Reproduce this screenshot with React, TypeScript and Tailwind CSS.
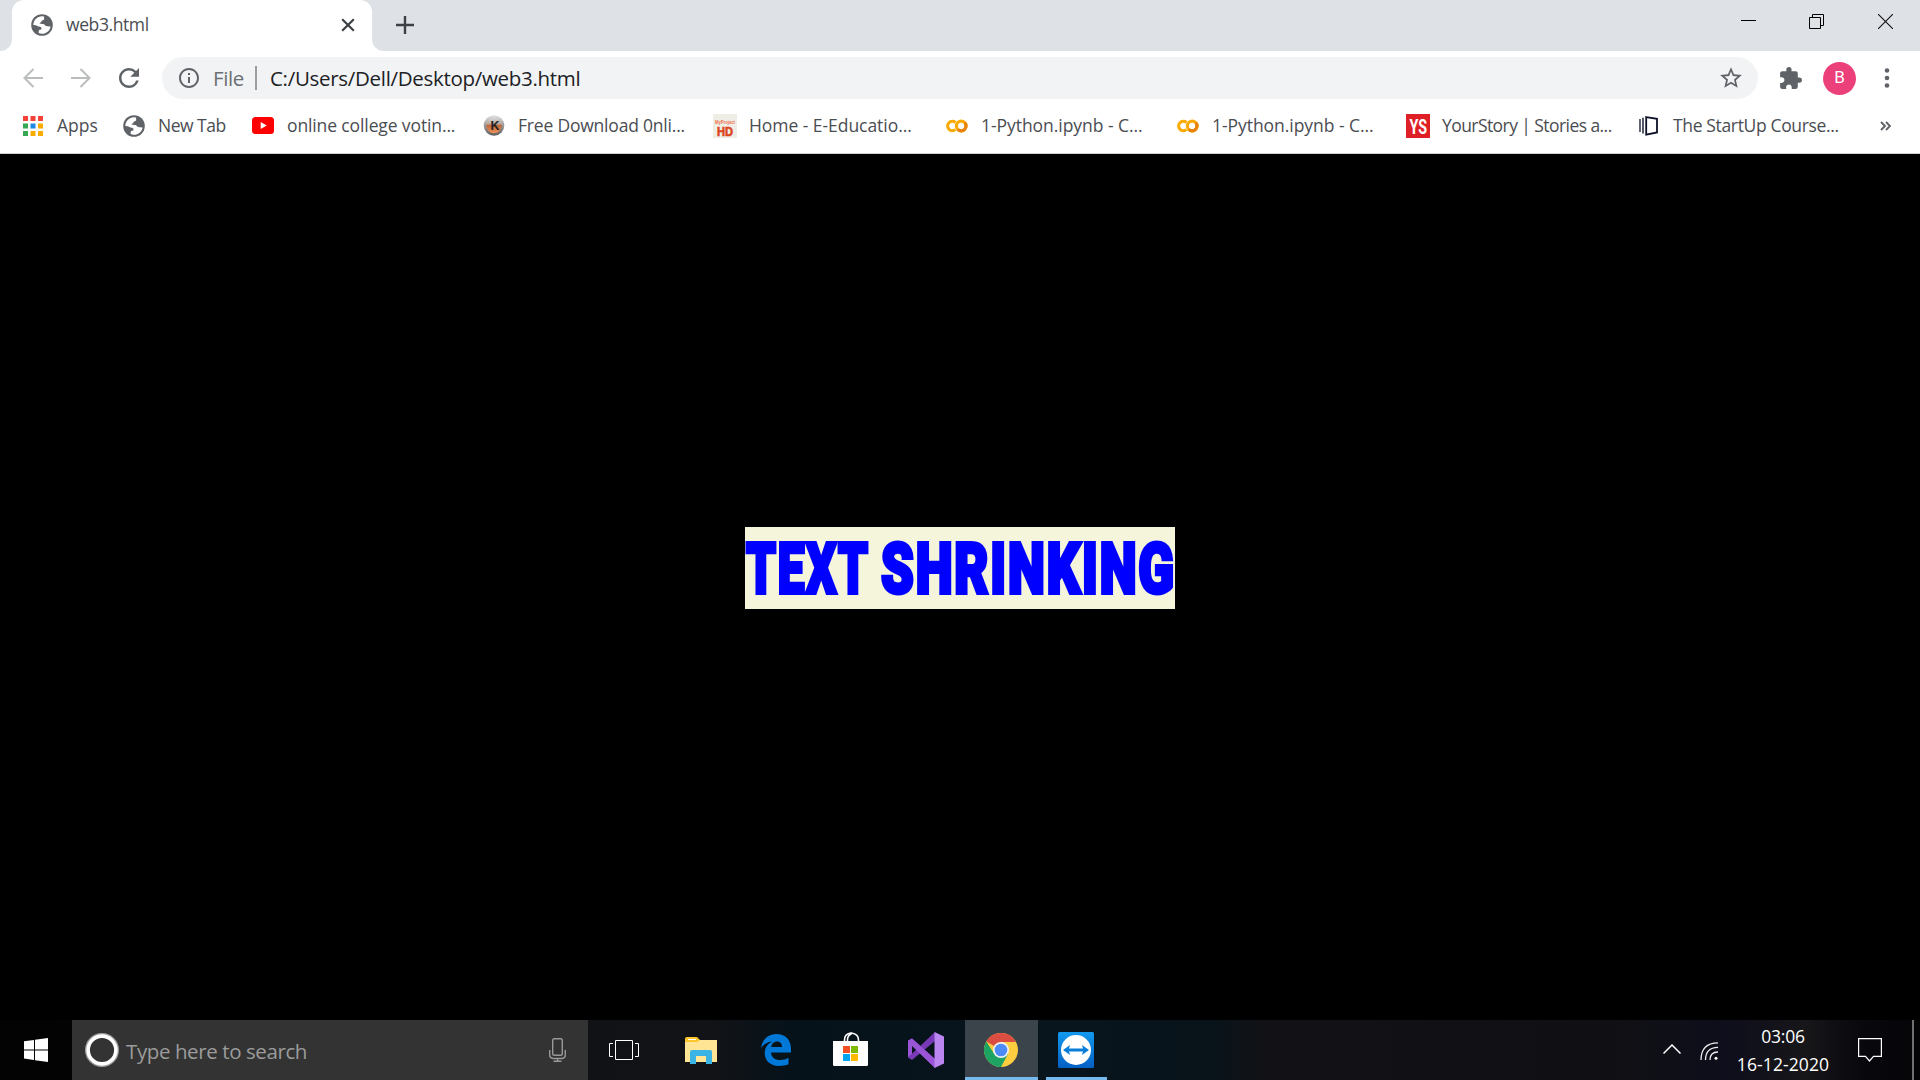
import type { ReactNode } from 'react';
import { MdRefresh, MdInfoOutline, MdStarBorder, MdExtension } from 'react-icons/md';

function Globe() {
  return (
    <svg width="22" height="22" viewBox="0 0 22 22">
      <circle cx="11" cy="11" r="10.8" fill="#5f6368" />
      <path d="M10.2 2.2 L13.2 2.4 C12.6 4 13.6 4.2 13.2 5.2 C12.6 6.6 10.6 5.8 10.4 7.4 C10.2 8.6 8.8 8.2 8.6 9.4 C10 10.2 12.4 9.2 13.4 10.6 C14 11.8 15 12.2 16.4 12.2 L19.6 12.4 C18.9 16.6 15.4 19.7 11 19.8 C9.8 19.8 8.6 19.5 7.6 19.1 L7.8 16.6 C8.2 15.4 10.4 16.2 10.6 14.4 C10.4 12.4 7.6 13 6.4 12 C5.2 11 3.8 11.2 2.3 11 C2.3 6.8 5.6 2.9 10.2 2.2Z" fill="#fff" />
    </svg>
  );
}

function AppsGrid() {
  const colors = ['#f44336', '#f44336', '#f44336', '#34a853', '#1e88e5', '#f9ab00', '#34a853', '#f9ab00', '#f9ab00'];
  return (
    <svg width="20" height="20" viewBox="0 0 20 20">
      {colors.map((c, i) => (
        <rect key={i} x={(i % 3) * 7.5} y={Math.floor(i / 3) * 7.5} width="5" height="5" fill={c} />
      ))}
    </svg>
  );
}

function YouTube() {
  return (
    <svg width="22" height="17" viewBox="0 0 22 17">
      <rect width="22" height="17" rx="3.5" fill="#f00" />
      <path d="M8.7 5v7l6-3.5z" fill="#fff" />
    </svg>
  );
}

function KBadge() {
  return (
    <svg width="22" height="22" viewBox="0 0 22 22" className="overflow-visible">
      <defs>
        <linearGradient id="kRim" x2="0" y2="1">
          <stop offset="0" stopColor="#e4e4e4" />
          <stop offset=".5" stopColor="#9a9a9a" />
          <stop offset="1" stopColor="#5c5c5c" />
        </linearGradient>
        <linearGradient id="kFace" x2="0" y2="1">
          <stop offset="0" stopColor="#d8d8d8" />
          <stop offset=".4" stopColor="#b9a79c" />
          <stop offset=".5" stopColor="#c0683a" />
          <stop offset="1" stopColor="#f0935a" />
        </linearGradient>
      </defs>
      <circle cx="11" cy="10.5" r="10.3" fill="url(#kRim)" />
      <circle cx="11" cy="10.5" r="7.8" fill="url(#kFace)" />
      <text x="7.5" y="15" fontFamily="Liberation Sans" fontWeight="700" fontSize="13" textLength="9" lengthAdjust="spacingAndGlyphs" fill="#222">K</text>
    </svg>
  );
}

function HDBadge() {
  return (
    <svg width="24" height="24" viewBox="0 0 24 24" className="overflow-visible">
      <rect width="24" height="24" fill="#eeeee6" />
      <text x="2" y="9.5" fontFamily="Liberation Sans" fontWeight="700" fontSize="5.2" textLength="20" lengthAdjust="spacingAndGlyphs" fill="#f0714f">MyProject</text>
      <text x="4" y="21.5" fontFamily="Liberation Sans" fontWeight="700" fontSize="12" textLength="16" lengthAdjust="spacingAndGlyphs" fill="#dc4520" stroke="#dc4520" strokeWidth=".6">HD</text>
    </svg>
  );
}

function Colab() {
  return (
    <svg width="22" height="14" viewBox="0 0 22 14" fill="none" strokeWidth="3.2">
      <path d="M9.4 3.4A4.7 4.7 0 1 0 9.4 10.6" stroke="#f9ab00" />
      <circle cx="15.2" cy="7" r="4.8" stroke="#f9ab00" />
      <path d="M11.8 10.4A4.8 4.8 0 0 0 18.6 3.6" stroke="#e8830c" />
    </svg>
  );
}

function YourStory() {
  return (
    <svg width="24" height="24" viewBox="0 0 24 24" className="overflow-visible">
      <rect width="24" height="24" fill="#df1f26" />
      <text x="3.5" y="19.5" fontFamily="Roboto" fontWeight="700" fontSize="20" textLength="17.5" lengthAdjust="spacingAndGlyphs" fill="#fff">YS</text>
    </svg>
  );
}

function StartUp() {
  return (
    <svg width="20" height="20" viewBox="0 0 20 20" fill="none" stroke="#0b1026">
      <path d="M1 3v13" strokeWidth="1.3" />
      <path d="M4 1.8v15.6" strokeWidth="1.4" />
      <path d="M7.2 1.1L18 2.8V16.4L7.2 18.6z" strokeWidth="1.8" />
    </svg>
  );
}

function Bookmark({ icon, label, width, tracking }: { icon: ReactNode; label: string; width: string; tracking: string }) {
  return (
    <div className={`flex shrink-0 items-center gap-3 ${width}`}>
      <span className="flex h-6 w-6 shrink-0 items-center justify-center">{icon}</span>
      <span className={`whitespace-nowrap pb-0.5 text-[17.5px] leading-6 text-[#4a4d51] ${tracking}`}>{label}</span>
    </div>
  );
}

function TitleBar() {
  return (
    <div className="flex h-[51px] bg-[#dee1e6]">
      <svg className="shrink-0" width="12" height="51"><path d="M0 51A12 12 0 0 0 12 39V51z" fill="#fff" /></svg>
      <div className="flex h-[51px] w-[360px] shrink-0 items-center rounded-t-[12px] bg-white pb-px pl-[19px] pr-[17px]">
        <Globe />
        <span className="ml-[13px] flex-1 pb-0.5 text-[17.5px] leading-6 tracking-[-0.4px] text-[#4a4d51]">web3.html</span>
        <svg width="14" height="14" viewBox="0 0 14 14" stroke="#3c4043" strokeWidth="2.2"><path d="M1.2 1.2l11.6 11.6M12.8 1.2L1.2 12.8" /></svg>
      </div>
      <svg className="shrink-0" width="12" height="51"><path d="M12 51A12 12 0 0 1 0 39V51z" fill="#fff" /></svg>
      <svg className="ml-3 mt-4 shrink-0" width="18" height="18" stroke="#3c4043" strokeWidth="2.4"><path d="M9 0v18M0 9h18" /></svg>
      <div className="ml-auto mr-[27px] flex gap-[53px] pt-[14px]">
        <svg width="15" height="15" stroke="#000"><path d="M0 6.5h15" /></svg>
        <svg width="15" height="15" stroke="#000" fill="none"><path d="M.5 3.5h11v11H.5zM3.5 3.5v-3h11v11h-3" /></svg>
        <svg width="15" height="15" stroke="#111" strokeWidth="1.1" className="ml-px"><path d="M0 0l15 15M15 0L0 15" /></svg>
      </div>
    </div>
  );
}

function Toolbar() {
  return (
    <div className="flex h-[54px] items-center bg-white pl-[23px]">
      <svg width="20" height="20" fill="none" stroke="#babcbe" strokeWidth="2"><path d="M20 10H1.5M10.5 1L1.5 10l9 9" /></svg>
      <svg className="ml-7" width="20" height="20" fill="none" stroke="#babcbe" strokeWidth="2"><path d="M0 10h18.5M9.5 1l9 9-9 9" /></svg>
      <MdRefresh className="ml-[23px] shrink-0 text-[#5f6368]" size={30} />
      <div className="ml-[18px] flex h-[42px] w-[1596px] items-center rounded-full bg-[#f1f3f4] pl-[15px] pr-[14px]">
        <MdInfoOutline className="shrink-0 text-[#5f6368]" size={24} />
        <span className="ml-3 w-[42px] text-[20.5px] leading-7 tracking-[-0.4px] text-[#6b6f73]">File</span>
        <span className="h-6 w-0.5 bg-[#9a9da1]" />
        <span className="ml-[13px] flex-1 text-[20.5px] leading-7 tracking-[-0.3px] text-[#202124]">C:/Users/Dell/Desktop/web3.html</span>
        <MdStarBorder className="shrink-0 text-[#5f6368]" size={26} />
      </div>
      <MdExtension className="ml-5 shrink-0 text-[#5f6368]" size={25} />
      <span className="ml-5 flex h-[33px] w-[33px] shrink-0 items-center justify-center rounded-full bg-[#ec407a] font-['Roboto'] text-[17px] text-white">B</span>
      <svg className="ml-[28px]" width="6" height="20" fill="#5f6368"><circle cx="3" cy="2.5" r="2.3" /><circle cx="3" cy="10" r="2.3" /><circle cx="3" cy="17.5" r="2.3" /></svg>
    </div>
  );
}

function BookmarksBar() {
  return (
    <div className="flex h-[49px] border-b border-[#d0d2d5] bg-white pb-[7px] pl-[21px]">
      <Bookmark icon={<AppsGrid />} label="Apps" width="w-[101px]" tracking="tracking-[0px]" />
      <Bookmark icon={<Globe />} label="New Tab" width="w-[129px]" tracking="tracking-[-0.5px]" />
      <Bookmark icon={<YouTube />} label="online college votin..." width="w-[231px]" tracking="tracking-[-0.12px]" />
      <Bookmark icon={<KBadge />} label="Free Download 0nli..." width="w-[231px]" tracking="tracking-[-0.2px]" />
      <Bookmark icon={<HDBadge />} label="Home - E-Educatio..." width="w-[232px]" tracking="tracking-[-0.05px]" />
      <Bookmark icon={<Colab />} label="1-Python.ipynb - C..." width="w-[231px]" tracking="tracking-[-0.05px]" />
      <Bookmark icon={<Colab />} label="1-Python.ipynb - C..." width="w-[230px]" tracking="tracking-[-0.05px]" />
      <Bookmark icon={<YourStory />} label="YourStory | Stories a..." width="w-[231px]" tracking="tracking-[-0.57px]" />
      <Bookmark icon={<StartUp />} label="The StartUp Course..." width="w-[243px]" tracking="tracking-[-0.35px]" />
      <svg className="mt-[16px]" width="11" height="10" fill="none" stroke="#5f6368" strokeWidth="1.9"><path d="M1 1l4 4-4 4M6 1l4 4-4 4" /></svg>
    </div>
  );
}

function Page() {
  return (
    <main className="flex h-[866px] justify-center bg-black pt-[373px]">
      <h1 className="flex h-[82px] w-[430px] whitespace-nowrap bg-[#f5f5dc] font-['Roboto'] text-[71px] font-black leading-[83px] text-[#0000ff]">
        <span className="w-[136px] shrink-0 pl-px"><span className="inline-block origin-left scale-x-[0.67] tracking-[2.5px] [-webkit-text-stroke:4px_#0000ff]">TEXT</span></span>
        <span className="w-[294px] shrink-0"><span className="inline-block origin-left scale-x-[0.738] tracking-[2.5px] [-webkit-text-stroke:4px_#0000ff]">SHRINKING</span></span>
      </h1>
    </main>
  );
}

function Taskbar() {
  return (
    <div className="flex h-[60px] bg-[linear-gradient(90deg,#030303_0%,#030303_3%,#101216_31%,#121316_37%,#06121a_41%,#08151c_55%,#08131a_63%,#121216_66%,#101014_84%,#0e0e1c_90%,#171619_94%,#08080d_97%,#050508_100%)] text-white">
      <div className="flex w-[72px] items-center justify-center">
        <svg width="24" height="24" viewBox="0 0 24 24" fill="#fff"><path d="M0 3.3L10 2v9.5H0zM11 1.8L24 0v11.5H11zM0 12.5h10V22L0 20.6zM11 12.5h13V24L11 22.2z" /></svg>
      </div>
      <div className="flex w-[516px] shrink-0 items-center bg-[#333333] pl-[13px] pr-[22px]">
        <svg width="34" height="34"><circle cx="17" cy="17" r="15" fill="none" stroke="#a0a0a0" strokeWidth="4" /><circle cx="17" cy="17" r="13.9" fill="none" stroke="#fff" strokeWidth="3.6" /></svg>
        <span className="ml-[7px] flex-1 pt-px text-[20.5px] leading-7 tracking-[-0.4px] text-[#9b9b9b]">Type here to search</span>
        <svg width="17" height="24" fill="none" stroke="#999" strokeWidth="1.4"><rect x="3.7" y=".7" width="9.6" height="16.6" rx="1.5" /><path d="M.7 12v4.5q0 4 4 4h7.6q4 0 4-4V12M8.5 20.5v3M4.5 23.2h8" /></svg>
      </div>
      <div className="flex w-[72px] items-center justify-center">
        <svg width="30" height="20" fill="none" stroke="#fff"><path d="M6.5.5h17v19h-17zM4 3.5H.5v13H4M26 3.5h3.5v13H26" /></svg>
      </div>
      <div className="flex w-[82px] items-center justify-center">
        <svg width="32" height="27"><path d="M0 2Q0 0 2 0h10l3 3v3H0z" fill="#fcc62d" /><path d="M0 5h12l3-2h17v22H0z" fill="#ffe594" /><path d="M3 2.5h8" stroke="#fff" /><path d="M5 27V15q0-2 2-2h18q2 0 2 2v12h-6v-8H11v8z" fill="#3ab3e5" /></svg>
      </div>
      <div className="flex w-[68px] items-center justify-center">
        <svg width="30" height="32" viewBox="0 0 30 32" fill="#0078d7"><path d="M0 14C1.5 5 7.5 0 15.5 0 25 0 30 6.5 30 15v3.5H10c.3 5 4.2 7.5 9 7.5 3.3 0 6-.8 8.5-2.2v6.5C24.8 31.5 21.7 32 18 32 9.2 32 3.7 26.5 3.7 19c0-5 2.8-9.3 7.5-11.5C6 8 2.5 10.5 0 14zM10.2 13H21c0-3.5-1.8-5.6-5-5.6s-5.3 2.3-5.8 5.6z" /></svg>
      </div>
      <div className="flex w-[81px] items-center justify-center pb-[2px]">
        <svg width="35" height="34"><path d="M11.5 11V8q0-6 6-7h1q7 1 7 7v3M14.5 11V8q0-5 4-6" fill="none" stroke="#fff" strokeWidth="1.6" /><path d="M0 9h35v23.5q0 1.5-1.5 1.5h-32Q0 34 0 32.5z" fill="#fff" /><path d="M10 14h7v7h-7z" fill="#f25022" /><path d="M18 14h7v7h-7z" fill="#7fba00" /><path d="M10 22h7v7h-7z" fill="#00a4ef" /><path d="M18 22h7v7h-7z" fill="#ffb900" /></svg>
      </div>
      <div className="flex w-[74px] items-center pl-[17px]">
        <svg width="36" height="36"><path d="M0 9l4-2.5V27.5L0 25.5z" fill="#52218a" /><path d="M4 6.5L27 27v9L0 9.3z" fill="#8e48cc" /><path d="M4 28L27 9V0L0 25.5z" fill="#7739b5" /><path d="M0 8.5l4-2L27 27v9L4 14v8l-4 3z" fill="#9a55d6" /><path d="M26.5 0L36 4.5v27L26.5 36z" fill="#bc86f0" /></svg>
      </div>
      <div className="flex w-[73px] flex-col items-center bg-[#3a444a]">
        <svg className="mr-0.5 mt-[13px]" width="34" height="34" viewBox="0 0 34 34"><circle cx="17" cy="17" r="17" fill="#ffcd40" /><path d="M17 17L2.3 8.5A17 17 0 0 1 31.9 9H17z" fill="#dc4d41" /><path d="M2.3 8.5A17 17 0 0 0 17 34L24 21 17 17 10 20.5z" fill="#1da462" /><circle cx="17" cy="17" r="8" fill="#f1f1f1" /><circle cx="17" cy="17" r="6.3" fill="#4c8bf5" /></svg>
        <span className="mt-auto h-[3px] w-full bg-[#76b9ed]" />
      </div>
      <div className="ml-2 flex w-[61px] flex-col items-center">
        <svg className="mr-px mt-3" width="36" height="36"><defs><linearGradient id="tv" x2="0" y2="1"><stop stopColor="#1299ee" /><stop offset="1" stopColor="#0560c4" /></linearGradient></defs><rect width="36" height="36" rx="1.5" fill="url(#tv)" /><circle cx="18" cy="18" r="15" fill="#fff" /><path d="M5 18l7-5-1 3.5h14L24 13l7 5-7 5 1-3.5H11l1 3.5z" fill="#087dd9" /></svg>
        <span className="mt-auto h-[3px] w-full bg-[#76b9ed]" />
      </div>
      <div className="ml-auto flex shrink-0">
        <svg className="mt-6" width="18" height="10" fill="none" stroke="#fff" strokeWidth="1.5"><path d="M.5 9.5L9 1l8.5 8.5" /></svg>
        <svg className="ml-[19px] mt-[22px]" width="18" height="18" fill="none" stroke="#eee" strokeWidth="1.3"><path d="M1 18Q1 1 18 .8M5.5 18Q5.5 5.5 18 5.3M10 18q0-8 8-8" /><circle cx="16" cy="16.3" r="1.5" fill="#fff" stroke="none" /></svg>
        <div className="ml-3 flex w-[106px] flex-col items-center pt-0.5 text-[17.5px] leading-[28px]"><span className="tracking-[-0.2px]">03:06</span><span className="tracking-[0.1px]">16-12-2020</span></div>
        <svg className="ml-[22px] mt-[18px]" width="24" height="24" fill="none" stroke="#fff" strokeWidth="1.2"><path d="M.6.6h22.8v17.8H15.5L11.5 23 7.5 18.4H.6z" /></svg>
        <span className="ml-[30px] mr-[6px] w-0.5 bg-[#717171]" />
      </div>
    </div>
  );
}

export default function App() {
  return (
    <div className="flex h-[1080px] w-[1920px] flex-col overflow-hidden bg-black font-['Open_Sans',sans-serif]">
      <TitleBar />
      <Toolbar />
      <BookmarksBar />
      <Page />
      <Taskbar />
    </div>
  );
}
